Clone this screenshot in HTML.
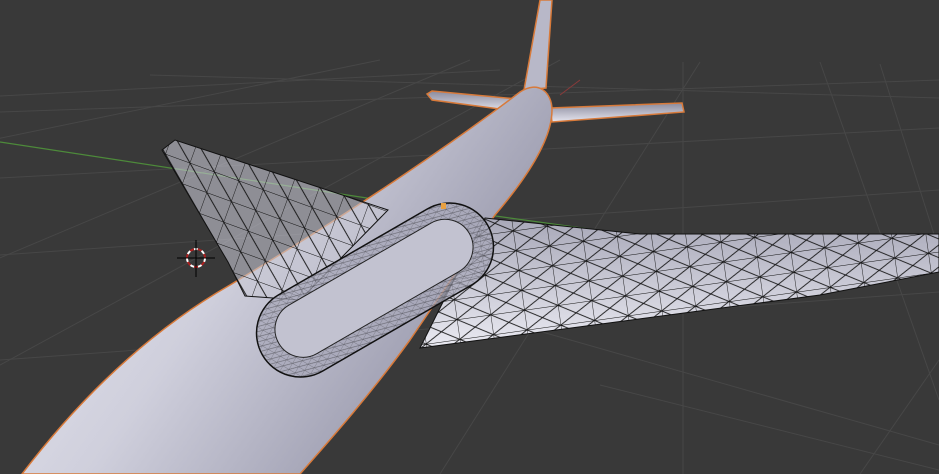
<!DOCTYPE html>
<html><head><meta charset="utf-8"><style>
html,body{margin:0;padding:0;background:#393939;width:939px;height:474px;overflow:hidden}
svg{display:block}
</style></head><body>
<svg width="939" height="474" viewBox="0 0 939 474" xmlns="http://www.w3.org/2000/svg">
<defs>
<linearGradient id="fus" x1="0" y1="0" x2="1" y2="0.5">
<stop offset="0" stop-color="#ececf4"/><stop offset="0.5" stop-color="#cfcfdc"/><stop offset="0.85" stop-color="#a4a4b6"/><stop offset="1" stop-color="#8a8a9c"/>
</linearGradient>
<linearGradient id="wing" x1="0" y1="0" x2="0" y2="1">
<stop offset="0" stop-color="#a8a8b8"/><stop offset="1" stop-color="#eaeaf2"/>
</linearGradient>
<linearGradient id="stab" x1="0" y1="0" x2="0" y2="1">
<stop offset="0" stop-color="#8a8a9c"/><stop offset="1" stop-color="#e6e6f0"/>
</linearGradient>
<pattern id="mesh" width="34" height="20" patternUnits="userSpaceOnUse" patternTransform="rotate(-8)">
<path d="M0 0H34M0 0V20M0 0L34 20M0 20L34 0" stroke="#111" stroke-width="0.9" fill="none"/>
</pattern>
<pattern id="meshL" width="26" height="22" patternUnits="userSpaceOnUse" patternTransform="rotate(20)">
<path d="M0 0H26M0 0V22M0 0L26 22" stroke="#111" stroke-width="0.9" fill="none"/>
</pattern>
<pattern id="mesh2" width="7" height="7" patternUnits="userSpaceOnUse" patternTransform="rotate(-30)">
<path d="M0 0H7M0 0V7M0 0L7 7" stroke="#111" stroke-width="0.6" fill="none"/>
</pattern>
</defs>
<rect width="939" height="474" fill="#393939"/>
<!-- grid -->
<g stroke="#474747" stroke-width="1" fill="none">
<path d="M0 112L939 80M0 178L939 128M0 255L939 190M0 360L939 292M150 75L939 98M0 96L500 70"/>
<path d="M600 385L939 470M430 300L939 445M-200 474L560 60M440 474L700 62M683 474L683 62M939 400L820 62M939 250L880 64M-100 300L470 60M-300 200L380 60M860 474L939 360"/>
</g>
<path d="M0 142L380 200L640 236" stroke="#4d8a3a" stroke-width="1.2" fill="none"/>
<path d="M560 95L580 80" stroke="#8a3a3a" stroke-width="1" fill="none"/>
<!-- tail fin -->
<path d="M524 90L540 0H552L546 88Z" fill="#b8b8c8" stroke="#d87a3a" stroke-width="1.5"/>
<!-- stabilizers -->
<path d="M427 94L432 91L528 100L522 112L432 100Z" fill="url(#stab)" stroke="#d87a3a" stroke-width="1.5"/>
<path d="M550 108L682 103L684 112L552 122Z" fill="url(#stab)" stroke="#d87a3a" stroke-width="1.5"/>
<!-- fuselage -->
<path d="M22 474C90 385 160 325 230 285C330 225 430 160 520 92C538 80 552 92 552 110C552 140 525 180 495 215L410 340C370 395 330 440 300 474Z" fill="url(#fus)" stroke="#d87a3a" stroke-width="1.5"/>
<!-- left wing -->
<path d="M162 150L175 140L388 210L300 300L245 296L228 262Z" fill="#c8c8d4" fill-opacity="0.6"/>
<path d="M162 150L175 140L388 210L300 300L245 296L228 262Z" fill="url(#meshL)" stroke="#111" stroke-width="1"/>
<!-- right wing -->
<path d="M485 218L640 234L939 234L939 272L820 295L420 348Z" fill="url(#wing)"/>
<path d="M485 218L640 234L939 234L939 272L820 295L420 348Z" fill="url(#mesh)" stroke="#111" stroke-width="1"/>
<!-- nacelle -->
<g transform="translate(375,290) rotate(-30)">
<rect x="-130" y="-44" width="260" height="88" rx="44" fill="#a8a8ba" fill-opacity="0.75" stroke="#111" stroke-width="1.5"/>
<rect x="-130" y="-44" width="260" height="88" rx="44" fill="url(#mesh2)" opacity="0.5"/>
<rect x="-110" y="-30" width="220" height="56" rx="28" fill="#c2c2d0" stroke="#222" stroke-width="1"/>
</g>
<rect x="441" y="203" width="5" height="6" fill="#e8a040"/>
<!-- 3D cursor -->
<g>
<circle cx="196" cy="258" r="9" fill="none" stroke="#fff" stroke-width="2" stroke-dasharray="4 4"/>
<circle cx="196" cy="258" r="9" fill="none" stroke="#b02020" stroke-width="2" stroke-dasharray="4 4" stroke-dashoffset="4"/>
<path d="M177 258H215M196 240V277" stroke="#000" stroke-width="1"/>
</g>
</svg>
</body></html>
